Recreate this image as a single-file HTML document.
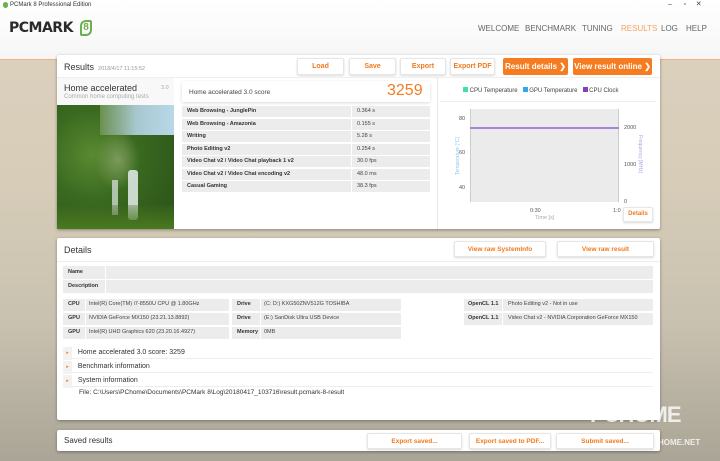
<!DOCTYPE html>
<html><head><meta charset="utf-8"><style>
*{box-sizing:border-box;margin:0;padding:0}
body{width:720px;height:461px;overflow:hidden;font-family:"Liberation Sans",sans-serif;position:relative;background:linear-gradient(180deg,#dcd2bf 0%,#d6ccb8 40%,#c9c1b0 70%,#aaa596 100%)}
.abs{position:absolute}
.panel{position:absolute;background:#fff;border-radius:2px;box-shadow:0 1px 3px rgba(0,0,0,.35)}
.btn{position:absolute;background:#fff;border:1px solid #e6e6e6;box-shadow:0 1px 2px rgba(0,0,0,.15);color:#f07a1e;font-size:7px;font-weight:bold;text-align:center;line-height:15px;border-radius:2px}
.obtn{position:absolute;background:#f57c20;color:#fff;font-size:8px;font-weight:bold;text-align:center;line-height:17px;border-radius:2px}
.row{position:absolute;height:11px;background:#ececec;font-size:5.5px;line-height:11px;color:#444}
.b{font-weight:bold;color:#333}
.nav{position:absolute;top:24px;font-size:8px;color:#666}
</style></head><body>
<div class="abs" style="left:0;top:0;width:720px;height:60px;background:linear-gradient(#fff,#f6f6f6);border-bottom:1px solid #f0b080"></div>
<div class="abs" style="left:3px;top:2px;width:5px;height:6px;background:#6ab04c;border-radius:3px"></div>
<div class="abs" style="left:10px;top:2px;font-size:6px;color:#333">PCMark 8 Professional Edition</div>
<div class="abs" style="left:668px;top:0;font-size:7px;color:#444">–&nbsp;&nbsp;&nbsp;&nbsp;&nbsp;&nbsp;▫&nbsp;&nbsp;&nbsp;&nbsp;&nbsp;✕</div>
<div class="abs" style="left:9px;top:20px;font-size:14px;font-weight:900;color:#2a2a2a;letter-spacing:-0.5px;font-family:'DejaVu Sans',sans-serif">PCMARK</div>
<div class="abs" style="left:80px;top:20px;width:12px;height:16px;border:2px solid #6ab04c;border-radius:6px 2px 6px 2px;color:#6ab04c;font-size:10px;font-weight:bold;line-height:12px;text-align:center">8</div>
<div class="nav" style="left:478px">WELCOME</div>
<div class="nav" style="left:525px">BENCHMARK</div>
<div class="nav" style="left:582px">TUNING</div>
<div class="nav" style="left:621px;color:#f4a460">RESULTS</div>
<div class="nav" style="left:661px">LOG</div>
<div class="nav" style="left:686px">HELP</div>

<div class="panel" style="left:57px;top:55px;width:603px;height:174px"></div>
<div class="abs" style="left:64px;top:62px;font-size:9px;color:#333">Results <span style="font-size:5.5px;color:#999">&nbsp;2018/4/17 11:15:52</span></div>
<div class="btn" style="left:297px;top:58px;width:47px;height:17px;line-height:15px">Load</div>
<div class="btn" style="left:349px;top:58px;width:47px;height:17px">Save</div>
<div class="btn" style="left:400px;top:58px;width:46px;height:17px">Export</div>
<div class="btn" style="left:450px;top:58px;width:45px;height:17px">Export PDF</div>
<div class="obtn" style="left:503px;top:58px;width:65px">Result details ❯</div>
<div class="obtn" style="left:573px;top:58px;width:79px">View result online ❯</div>
<div class="abs" style="left:57px;top:77px;width:603px;height:1px;background:#eee"></div>
<div class="abs" style="left:57px;top:78px;width:117px;height:151px;background:#f8f8f8"></div>
<div class="abs" style="left:64px;top:83px;font-size:9px;color:#333">Home accelerated</div>
<div class="abs" style="left:161px;top:85px;font-size:5.5px;color:#aaa">3.0</div>
<div class="abs" style="left:64px;top:94px;font-size:6px;color:#aaa">Common home computing tests</div>
<div class="abs" style="left:57px;top:105px;width:117px;height:124px;background:radial-gradient(circle at 30% 40%,#5a8a30 0,#3a6a20 40%,#2a5018 100%)"></div>
<div class="abs" style="left:100px;top:105px;width:74px;height:30px;background:linear-gradient(90deg,#6a9050,#a8c8d0 50%,#b8d8e8)"></div>
<div class="abs" style="left:95px;top:130px;width:45px;height:60px;background:radial-gradient(ellipse,#7a9a5a,rgba(80,110,50,0) 70%)"></div>
<div class="abs" style="left:128px;top:170px;width:10px;height:50px;background:#e4ecec;opacity:.85;border-radius:3px"></div>
<div class="abs" style="left:112px;top:180px;width:6px;height:35px;background:#dfe8e8;opacity:.7"></div>
<div class="abs" style="left:57px;top:205px;width:117px;height:24px;background:linear-gradient(180deg,rgba(60,100,30,.3),#4a7a20)"></div>

<div class="abs" style="left:182px;top:81px;width:248px;height:21px;background:#fff;box-shadow:0 1px 3px rgba(0,0,0,.15)"></div>
<div class="abs" style="left:189px;top:89px;font-size:6.5px;color:#444">Home accelerated 3.0 score</div>
<div class="abs" style="left:387px;top:82px;font-size:16px;color:#f57c20">3259</div>
<div class="row b" style="left:182px;top:106px;width:169px;padding-left:5px">Web Browsing - JunglePin</div><div class="row" style="left:352px;top:106px;width:78px;padding-left:5px">0.364 s</div>
<div class="row b" style="left:182px;top:118.5px;width:169px;padding-left:5px">Web Browsing - Amazonia</div><div class="row" style="left:352px;top:118.5px;width:78px;padding-left:5px">0.155 s</div>
<div class="row b" style="left:182px;top:131px;width:169px;padding-left:5px">Writing</div><div class="row" style="left:352px;top:131px;width:78px;padding-left:5px">5.28 s</div>
<div class="row b" style="left:182px;top:143.5px;width:169px;padding-left:5px">Photo Editing v2</div><div class="row" style="left:352px;top:143.5px;width:78px;padding-left:5px">0.254 s</div>
<div class="row b" style="left:182px;top:156px;width:169px;padding-left:5px">Video Chat v2 / Video Chat playback 1 v2</div><div class="row" style="left:352px;top:156px;width:78px;padding-left:5px">30.0 fps</div>
<div class="row b" style="left:182px;top:168.5px;width:169px;padding-left:5px">Video Chat v2 / Video Chat encoding v2</div><div class="row" style="left:352px;top:168.5px;width:78px;padding-left:5px">48.0 ms</div>
<div class="row b" style="left:182px;top:181px;width:169px;padding-left:5px">Casual Gaming</div><div class="row" style="left:352px;top:181px;width:78px;padding-left:5px">38.3 fps</div>

<div class="abs" style="left:437px;top:78px;width:1px;height:151px;background:#e8e8e8"></div>
<div class="abs" style="left:463px;top:87px;font-size:6px;color:#444;white-space:nowrap"><span style="display:inline-block;width:5px;height:5px;background:#3ee0b0"></span> CPU Temperature&nbsp;&nbsp;&nbsp;<span style="display:inline-block;width:5px;height:5px;background:#30a8f0"></span> GPU Temperature&nbsp;&nbsp;&nbsp;<span style="display:inline-block;width:5px;height:5px;background:#8040c0"></span> CPU Clock</div>
<div class="abs" style="left:440px;top:101px;width:216px;height:1px;background:#eee"></div>
<div class="abs" style="left:470px;top:109px;width:149px;height:93px;background:#ebebeb;border-left:1px solid #ccc;border-right:1px solid #ccc"></div>
<div class="abs" style="left:470px;top:127px;width:149px;height:2px;background:#a884d8"></div>
<div class="abs" style="left:459px;top:116px;font-size:5.5px;color:#555">80</div>
<div class="abs" style="left:459px;top:150px;font-size:5.5px;color:#555">60</div>
<div class="abs" style="left:459px;top:185px;font-size:5.5px;color:#555">40</div>
<div class="abs" style="left:455px;top:175px;font-size:5px;color:#8cc8f0;transform:rotate(-90deg);transform-origin:left top;white-space:nowrap">Temperature [°C]</div>
<div class="abs" style="left:643px;top:135px;font-size:5px;color:#b8a0e0;transform:rotate(90deg);transform-origin:left top;white-space:nowrap">Frequency [MHz]</div>
<div class="abs" style="left:624px;top:125px;font-size:5.5px;color:#555">2000</div>
<div class="abs" style="left:624px;top:162px;font-size:5.5px;color:#555">1000</div>
<div class="abs" style="left:624px;top:199px;font-size:5.5px;color:#555">0</div>
<div class="abs" style="left:530px;top:208px;font-size:5.5px;color:#555">0:30</div>
<div class="abs" style="left:613px;top:208px;font-size:5.5px;color:#555">1:0</div>
<div class="abs" style="left:535px;top:215px;font-size:5.5px;color:#aaa">Time [s]</div>
<div class="btn" style="left:623px;top:207px;width:30px;height:15px;font-size:6px;line-height:13px">Details</div>

<div class="panel" style="left:57px;top:238px;width:603px;height:182px"></div>
<div class="abs" style="left:64px;top:245px;font-size:9px;color:#333">Details</div>
<div class="btn" style="left:454px;top:241px;width:92px;height:16px;font-size:6.5px">View raw SystemInfo</div>
<div class="btn" style="left:557px;top:241px;width:97px;height:16px;font-size:6.5px">View raw result</div>
<div class="abs" style="left:57px;top:261px;width:603px;height:1px;background:#eee"></div>
<div class="row b" style="left:63px;top:266px;width:42px;height:13px;line-height:13px;padding-left:5px">Name</div><div class="row" style="left:106px;top:266px;width:547px;height:13px"></div>
<div class="row b" style="left:63px;top:280px;width:42px;height:13px;line-height:13px;padding-left:5px">Description</div><div class="row" style="left:106px;top:280px;width:547px;height:13px"></div>

<div class="row b" style="left:63px;top:299px;width:22px;height:12px;padding-left:5px">CPU</div><div class="row" style="left:86px;top:299px;width:143px;height:12px;padding-left:3px">Intel(R) Core(TM) i7-8550U CPU @ 1.80GHz</div>
<div class="row b" style="left:63px;top:313px;width:22px;height:12px;padding-left:5px">GPU</div><div class="row" style="left:86px;top:313px;width:143px;height:12px;padding-left:3px">NVIDIA GeForce MX150 (23.21.13.8892)</div>
<div class="row b" style="left:63px;top:327px;width:22px;height:12px;padding-left:5px">GPU</div><div class="row" style="left:86px;top:327px;width:143px;height:12px;padding-left:3px">Intel(R) UHD Graphics 620 (23.20.16.4927)</div>
<div class="row b" style="left:232px;top:299px;width:28px;height:12px;padding-left:5px">Drive</div><div class="row" style="left:261px;top:299px;width:140px;height:12px;padding-left:3px">(C: D:) KXG50ZNV512G TOSHIBA</div>
<div class="row b" style="left:232px;top:313px;width:28px;height:12px;padding-left:5px">Drive</div><div class="row" style="left:261px;top:313px;width:140px;height:12px;padding-left:3px">(E:) SanDisk Ultra USB Device</div>
<div class="row b" style="left:232px;top:327px;width:28px;height:12px;padding-left:5px">Memory</div><div class="row" style="left:261px;top:327px;width:140px;height:12px;padding-left:3px">0MB</div>
<div class="row b" style="left:464px;top:299px;width:38px;height:12px;padding-left:4px">OpenCL 1.1</div><div class="row" style="left:503px;top:299px;width:150px;height:12px;padding-left:5px">Photo Editing v2 - Not in use</div>
<div class="row b" style="left:464px;top:313px;width:38px;height:12px;padding-left:4px">OpenCL 1.1</div><div class="row" style="left:503px;top:313px;width:150px;height:12px;padding-left:5px">Video Chat v2 - NVIDIA Corporation GeForce MX150</div>

<div class="abs" style="left:63px;top:346px;width:590px;height:13px;border-bottom:1px solid #eee;font-size:7px;line-height:13px;color:#333"><span style="display:inline-block;width:9px;background:#f2f2f2;color:#f57c20;font-size:5px;text-align:center">▸</span>&nbsp;&nbsp;&nbsp;Home accelerated 3.0 score: 3259</div>
<div class="abs" style="left:63px;top:360px;width:590px;height:13px;border-bottom:1px solid #eee;font-size:7px;line-height:13px;color:#333"><span style="display:inline-block;width:9px;background:#f2f2f2;color:#f57c20;font-size:5px;text-align:center">▸</span>&nbsp;&nbsp;&nbsp;Benchmark information</div>
<div class="abs" style="left:63px;top:374px;width:590px;height:13px;border-bottom:1px solid #eee;font-size:7px;line-height:13px;color:#333"><span style="display:inline-block;width:9px;background:#f2f2f2;color:#f57c20;font-size:5px;text-align:center">▸</span>&nbsp;&nbsp;&nbsp;System information</div>
<div class="abs" style="left:79px;top:389px;font-size:6.5px;color:#333">File: C:\Users\PChome\Documents\PCMark 8\Log\20180417_103716\result.pcmark-8-result</div>

<div class="abs" style="left:590px;top:402px;font-size:22px;font-weight:bold;color:rgba(255,255,255,.8);letter-spacing:-1px">PCHOME</div>
<div class="abs" style="left:658px;top:438px;font-size:8px;font-weight:bold;color:rgba(255,255,255,.8)">HOME.NET</div>
<div class="panel" style="left:57px;top:430px;width:603px;height:21px"></div>
<div class="abs" style="left:64px;top:436px;font-size:8px;color:#333">Saved results</div>
<div class="btn" style="left:367px;top:433px;width:95px;height:16px;font-size:6.5px">Export saved...</div>
<div class="btn" style="left:469px;top:433px;width:82px;height:16px;font-size:6.5px">Export saved to PDF...</div>
<div class="btn" style="left:556px;top:433px;width:98px;height:16px;font-size:6.5px">Submit saved...</div>
</body></html>
